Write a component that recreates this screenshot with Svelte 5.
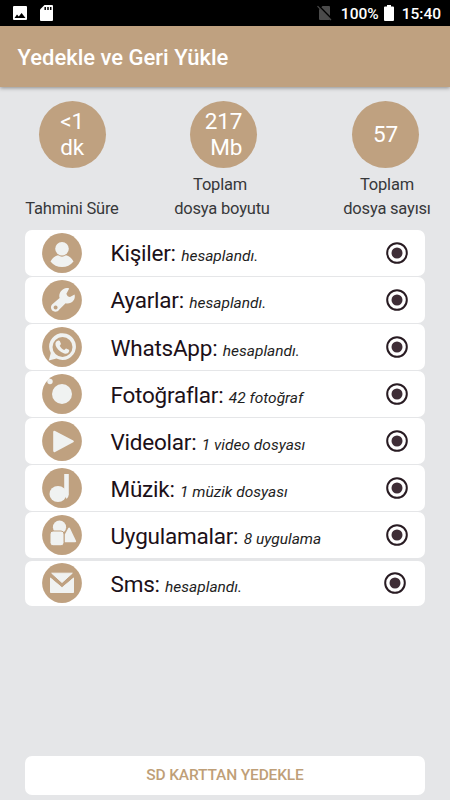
<script>
	const stats = [
		{ value: ['<1', 'dk'], label: ['Tahmini Süre'] },
		{ value: ['217', '\u00a0Mb'], label: ['Toplam\u00a0', 'dosya boyutu'] },
		{ value: ['57'], label: ['Toplam', 'dosya sayısı'] }
	];

	const rows = [
		{ icon: 'person', name: 'Kişiler', detail: 'hesaplandı.' },
		{ icon: 'wrench', name: 'Ayarlar', detail: 'hesaplandı.' },
		{ icon: 'whatsapp', name: 'WhatsApp', detail: 'hesaplandı.' },
		{ icon: 'camera', name: 'Fotoğraflar', detail: '42 fotoğraf' },
		{ icon: 'play', name: 'Videolar', detail: '1 video dosyası' },
		{ icon: 'music', name: 'Müzik', detail: '1 müzik dosyası' },
		{ icon: 'apps', name: 'Uygulamalar', detail: '8 uygulama' },
		{ icon: 'mail', name: 'Sms', detail: 'hesaplandı.' }
	];
</script>

<div class="screen">
	<div class="statusbar">
		<svg class="picture" width="14" height="14" viewBox="0 0 14 14">
			<rect width="14" height="14" rx="1" fill="#fff" />
			<path d="M1.5 12 4 8.5l1.8 2L8.6 7l3.9 5z" fill="#000" />
		</svg>
		<svg class="card" width="13" height="16" viewBox="0 0 13 16">
			<path d="M4.5 0H12a1 1 0 0 1 1 1v14a1 1 0 0 1-1 1H1a1 1 0 0 1-1-1V4.5z" fill="#fff" />
			<path d="M5.2 2v3M8 2v3M10.700 2v3" stroke="#000" stroke-width="1.5" />
		</svg>
		<svg class="nosim" width="15" height="16" viewBox="0 0 15 16">
			<path d="M5.5 1H12a1 1 0 0 1 1 1v12a1 1 0 0 1-1 1H3a1 1 0 0 1-1-1V4.5z" fill="#4b4b4b" />
			<path d="M1.5 .6 15 14.2" stroke="#000" stroke-width="1.8" />
			<path d="M.5 1.2 14 15" stroke="#4b4b4b" stroke-width="1.2" />
		</svg>
		<span class="percent">100%</span>
		<svg class="battery" width="10" height="16" viewBox="0 0 10 16">
			<path d="M3 0h4v1.5h2a1 1 0 0 1 1 1V15a1 1 0 0 1-1 1H1a1 1 0 0 1-1-1V2.5a1 1 0 0 1 1-1h2z" fill="#fff" />
		</svg>
		<span class="clock">15:40</span>
	</div>

	<header>Yedekle ve Geri Yükle</header>

	<div class="stats">
		{#each stats as stat}
			<div class="stat">
				<div class="bubble">
					{#each stat.value as line}<div>{line}</div>{/each}
				</div>
				<div class="caption">
					{#each stat.label as line}<div>{line}</div>{/each}
				</div>
			</div>
		{/each}
	</div>

	<div class="list">
		{#each rows as row}
			<div class="row">
				<svg class="icon" viewBox="0 0 40 40">
					<circle cx="20" cy="20" r="19.9" fill="#bfa180" />
					<g fill="#f0f2f1">
						{#if row.icon === 'person'}
							<circle cx="20" cy="15.8" r="6.8" />
							<path d="M8.5 28.5Q11.5 23 16 22.3Q20 25 24 22.3Q28.5 23 31.5 28.5Q27 34 20 34T8.5 28.5z" />
						{:else if row.icon === 'wrench'}
							<path fill-rule="evenodd" d="M27.2 8.4 24.4 13.700Q25.500 17 28 17L32.600 14.500C34 20 29.200 24.500 23.6 23.3L17.3 29.4C16 31.5 13.5 32.4 11.1 31C8.5 29.3 8.2 25.8 10.6 23.9L17.6 18C15.9 12.4 21.7 6.2 27.2 8.4zM13.6 25.6a2 2 0 1 0 .01 0z" />
						{:else if row.icon === 'whatsapp'}
							<path d="M6.800 33.500 8.8 26A13.4 13.4 0 1 1 14.5 31.5z" />
							<circle cx="20.5" cy="20" r="10" fill="#bfa180" />
							<path d="M16.2 13.500c.8-.3 1.400 0 1.700.8l1 2.400c.2.700-1 1.600-1.200 2.100 1 2 2.400 3.300 4.400 4.100.700-.2 1.400-1.700 2.100-1.500l2.700 1.300c.9.5-.1 2.900-1.200 3.500-2.300 1.300-5.600-.2-7.900-2.100-2.300-2-4.700-4.900-4.400-7.600.2-1.400 1.400-2.700 2.800-3z" />
						{:else if row.icon === 'camera'}
							<circle cx="20" cy="20" r="10" />
							<circle cx="8" cy="7.5" r="2.7" />
						{:else if row.icon === 'play'}
							<path d="M11.2 11v18.8q.1 2 1.900 1.100l18.200-9.600q1.300-.9 0-1.8l-18.200-9.600q-1.800-.7-1.900 1.100z" />
						{:else if row.icon === 'music'}
							<ellipse cx="16" cy="26" rx="8.5" ry="8" />
							<path d="M22.200 6h4.600v20.500q-.3 3-2.300 4.500L22.200 25z" />
						{:else if row.icon === 'apps'}
							<circle cx="17.500" cy="12.2" r="6.6" />
							<path d="M26.3 13q.8-1.2 1.600 0l6.200 13q.3 1.100-.8 1.200H22.600V19.7z" />
							<rect x="8" y="16" width="14" height="14.8" rx="3" stroke="#bfa180" stroke-width="1" />
						{:else}
							<path d="M9.700 10.200h20.600L20 19.500z" stroke="#f0f2f1" stroke-width="1" stroke-linejoin="round" />
							<path d="M8.500 14.800 20 24.6 31.500 14.8V29.500H8.500z" stroke="#f0f2f1" stroke-width="1" stroke-linejoin="round" />
							<path d="M7 12 20 22.8 33 12" fill="none" stroke="#bfa180" stroke-width="1.800" />
						{/if}
					</g>
				</svg>
				<div class="text">{row.name}: <em>{row.detail}</em></div>
				<svg class="radio" viewBox="0 0 22 22">
					<circle cx="11" cy="11" r="9.8" fill="none" stroke="#281b22" stroke-width="2" />
					<circle cx="11" cy="11" r="5.5" fill="#3e2d36" />
				</svg>
			</div>
		{/each}
	</div>

	<button>SD KARTTAN YEDEKLE</button>
</div>

<style>
	:global(body) {
		margin: 0;
	}
	.screen {
		width: 450px;
		height: 800px;
		display: flex;
		flex-direction: column;
		box-sizing: border-box;
		overflow: hidden;
		background: #e5e6e8;
		font-family: Roboto, sans-serif;
	}
	.statusbar {
		display: flex;
		align-items: center;
		flex: none;
		height: 26px;
		padding: 0 9px 0 13px;
		background: #000;
		color: #fff;
		font-size: 15.5px;
		font-weight: 500;
		line-height: 28px;
	}
	.card {
		margin-left: 13px;
	}
	.nosim {
		margin-left: auto;
	}
	.percent {
		margin: 2px 5px 0 9px;
	}
	.clock {
		margin: 2px 0 0 8px;
	}
	header {
		flex: none;
		height: 61px;
		padding-left: 17.5px;
		background: #bfa180;
		box-shadow: 0 1px 4px rgba(0, 0, 0, 0.4);
		color: #fff;
		font-size: 22px;
		font-weight: 500;
		line-height: 64px;
	}
	.stats {
		display: grid;
		grid-template-columns: 94px 96px 88px;
		column-gap: 55px;
		flex: none;
		height: 129px;
		padding: 13.5px 19px 0 25px;
		box-sizing: border-box;
	}
	.stat {
		display: flex;
		flex-direction: column;
		align-items: center;
		white-space: nowrap;
	}
	.stat:nth-child(2) .bubble {
		margin-left: 3px;
	}
	.stat:nth-child(3) {
		margin-left: 18px;
		margin-right: -18px;
	}
	.stat:nth-child(3) .bubble {
		margin-right: 3px;
	}
	.bubble {
		display: flex;
		flex-direction: column;
		align-items: center;
		justify-content: center;
		width: 67px;
		height: 67px;
		border-radius: 50%;
		background: #bfa180;
		color: #fff;
		font-size: 22.5px;
		line-height: 26px;
		letter-spacing: -0.2px;
	}
	.caption {
		display: flex;
		flex-direction: column;
		justify-content: flex-end;
		height: 53px;
		color: #37383a;
		font-size: 16.5px;
		line-height: 24px;
		letter-spacing: -0.2px;
		text-align: center;
	}
	.list {
		display: flex;
		flex-direction: column;
		gap: 1.4px;
		padding: 14px 25px 0;
	}
	.row {
		display: flex;
		align-items: center;
		height: 45.7px;
		padding: 0 17.5px 0 17px;
		border-radius: 7px;
		background: #fff;
	}
	.row:last-child {
		margin-top: 1px;
		padding-right: 19.5px;
	}
	.icon {
		width: 40px;
		height: 40px;
	}
	.text {
		margin: 4px 0 0 28.5px;
		color: #1c1018;
		font-size: 22.5px;
		line-height: 46px;
		letter-spacing: -0.23px;
		white-space: nowrap;
	}
	.text em {
		color: #1e1e1e;
		font-size: 15.5px;
		letter-spacing: 0;
	}
	.radio {
		width: 22px;
		height: 22px;
		margin-left: auto;
	}
	button {
		height: 38.5px;
		margin: auto 25px 5.5px;
		border: 0;
		border-radius: 7px;
		background: #fff;
		color: #bf9f78;
		font-family: inherit;
		font-size: 15.5px;
		font-weight: 500;
		letter-spacing: -0.15px;
	}
</style>
